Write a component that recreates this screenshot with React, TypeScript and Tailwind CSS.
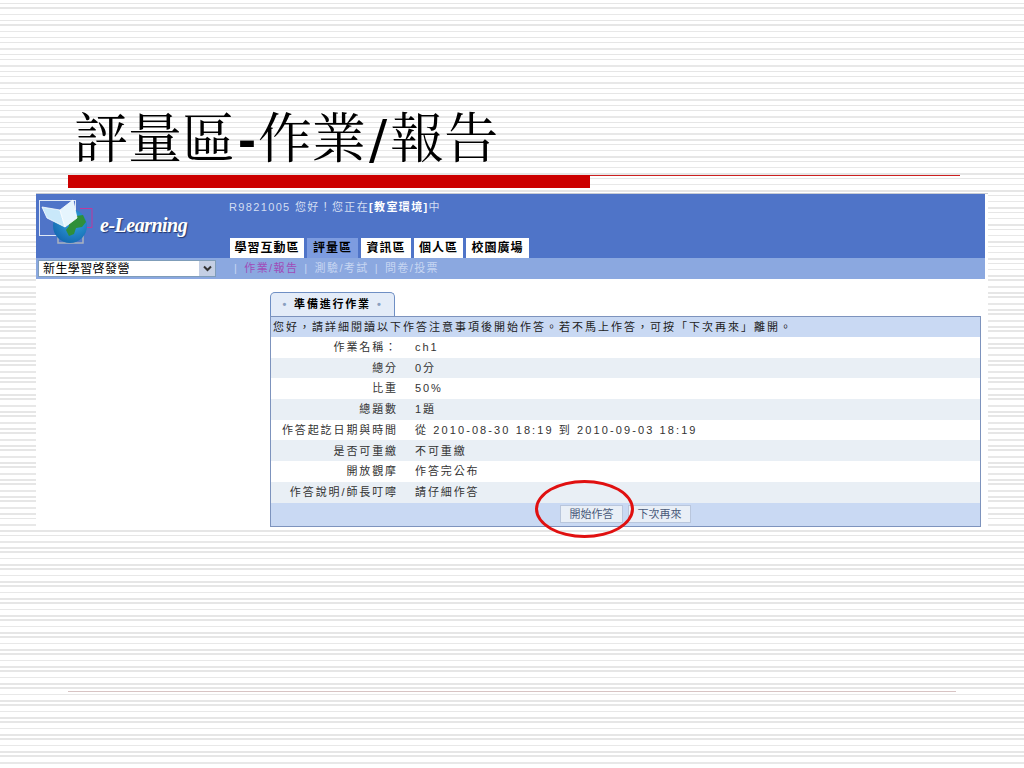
const rows = [
  { label: '作業名稱：', value: 'ch1', tone: 'bg-white', wide: false },
  { label: '總分', value: '0分', tone: 'bg-[#e9eff5]', wide: false },
  { label: '比重', value: '50%', tone: 'bg-white', wide: false },
  { label: '總題數', value: '1題', tone: 'bg-[#e9eff5]', wide: false },
  { label: '作答起訖日期與時間', value: '從 2010-08-30 18:19 到 2010-09-03 18:19', tone: 'bg-white', wide: true },
  { label: '是否可重繳', value: '不可重繳', tone: 'bg-[#e9eff5]', wide: false },
  { label: '開放觀摩', value: '作答完公布', tone: 'bg-white', wide: false },
  { label: '作答說明/師長叮嚀', value: '請仔細作答', tone: 'bg-[#e9eff5]', wide: false },
];

const tabs = [
  { name: '學習互動區', width: 'w-[74px]' },
  { name: '評量區', width: 'w-[51px]' },
  { name: '資訊區', width: 'w-[50px]' },
  { name: '個人區', width: 'w-[49px]' },
  { name: '校園廣場', width: 'w-[63px]' },
];

function Logo() {
  return (
    <svg width="60" height="52" viewBox="0 0 60 52" className="mt-[1px] shrink-0">
      <defs>
        <radialGradient id="globe" cx="0.6" cy="0.35" r="0.8">
          <stop offset="0" stopColor="#35a6e0" />
          <stop offset="1" stopColor="#0f5fa8" />
        </radialGradient>
      </defs>
      <rect x="2.5" y="5.5" width="36" height="35" fill="none" stroke="#dfe8f5" />
      <path d="M43 13.5h12v19h-12" fill="none" stroke="#c0399a" />
      <path d="M21 36v12h25v-12" fill="none" stroke="#aab2be" strokeWidth="1.5" />
      <circle cx="33" cy="31" r="17" fill="url(#globe)" />
      <path d="M32 27l7-6 7-1 3 7-4 5-6 1-2 6-5 2-3-6 3-4z" fill="#2f8f3a" />
      <path d="M5 12l18 3 5 17-18-9z" fill="#c9e8fa" stroke="#ffffff" strokeWidth="0.8" />
      <path d="M23 15L36 5l4 18-12 9z" fill="#e6f5fd" stroke="#ffffff" strokeWidth="0.8" />
    </svg>
  );
}

export default function App() {
  return (
    <div className="relative h-[768px] w-[1024px] overflow-hidden bg-white bg-[repeating-linear-gradient(to_bottom,#ffffff_0px,#ffffff_3px,#e6e6e6_3px,#e6e6e6_4.5px,#ffffff_4.5px,#ffffff_7.5px,#e6e6e6_7.5px,#e6e6e6_9px,#ffffff_9px,#ffffff_14px,#e8e8e8_14px,#e8e8e8_15.5px,#ffffff_15.5px,#ffffff_17px)] font-['Liberation_Sans','Noto_Sans_CJK_TC',sans-serif]">
      <h1 className="pl-[74px] pt-[108px] font-['Liberation_Serif','Noto_Serif_CJK_TC','Noto_Sans_CJK_TC',serif] text-[54px] leading-[62px] font-normal text-black">
        評量區<span className="px-[2px] font-['Liberation_Sans',sans-serif] font-bold">-</span>作業
        <span className="px-[3px] font-['DejaVu_Sans',sans-serif]">/</span>報告
      </h1>

      <div className="mt-[4px] ml-[68px] flex h-[13px] w-[892px] items-start">
        <div className="h-[13px] w-[522px] bg-[#cc0000]" />
        <div className="h-px flex-1 bg-[#cc2020]" />
      </div>

      <div className="mt-[5px] ml-[36px] w-[952px] border-t border-[#c8ccd4] bg-white">
        <div className="mr-[3px] h-[64px] bg-[#4f74c8] pl-[1px]">
          <div className="flex">
            <div className="flex w-[192px] items-start">
              <Logo />
              <span className="mt-[17px] ml-[3px] font-['Liberation_Serif',serif] text-[20px] leading-[28px] font-bold tracking-[-0.5px] text-white italic [text-shadow:1px_1px_1px_#23386e]">
                e-Learning
              </span>
            </div>
            <div className="pt-[6px]">
              <p className="text-[11px] leading-[14px] tracking-[1.35px] text-[#d3def2]">
                R9821005 您好！您正在<b className="text-white">[教室環境]</b>中
              </p>
              <div className="mt-[24px] ml-[1px] flex gap-[3px]">
                {tabs.map((t, i) => (
                  <div
                    key={t.name}
                    className={`flex h-[20px] items-center justify-center text-[12px] font-bold tracking-[1px] text-black ${t.width} ${i === 1 ? 'bg-[#7d9ce0]' : 'bg-white'}`}
                  >
                    {t.name}
                  </div>
                ))}
              </div>
            </div>
          </div>
        </div>

        <div className="mr-[3px] flex h-[21px] items-center bg-[#8ba8e0]">
          <div className="ml-[2px] flex h-[17px] w-[178px] items-center justify-between border border-[#7f9db9] bg-white pl-[4px] text-[12px] tracking-[0.4px] text-black">
            新生學習啓發營
            <span className="flex h-[15px] w-[16px] items-center justify-center bg-[#c4cfe4]">
              <svg width="9" height="7" viewBox="0 0 9 7">
                <path d="M1 1.5l3.5 3.5 3.5-3.5" fill="none" stroke="#333" strokeWidth="2" />
              </svg>
            </span>
          </div>
          <div className="ml-[18px] flex items-center gap-[6px] text-[11px] tracking-[1.4px] text-[#c7d6f2]">
            <span>|</span>
            <span className="text-[#a04cb8]">作業/報告</span>
            <span>|</span>
            <span>測驗/考試</span>
            <span>|</span>
            <span>問卷/投票</span>
          </div>
        </div>

        <div className="pl-[234px] pr-[7px] pt-[13px]">
          <div className="flex h-[24px] w-[125px] items-center justify-center gap-[6px] rounded-t-[5px] border border-b-0 border-[#6f8fc4] bg-[#e4ecf8] text-[11px] font-bold tracking-[1.8px] text-black">
            <span className="text-[#8aa0c0]">•</span>
            準備進行作業
            <span className="text-[#8aa0c0]">•</span>
          </div>
          <div className="border border-[#7d93bd]">
            <div className="flex h-[20px] items-center bg-[#c9d9f3] pl-[2px] text-[11px] tracking-[2px] whitespace-nowrap text-[#222]">
              您好，請詳細閱讀以下作答注意事項後開始作答。若不馬上作答，可按「下次再來」離開。
            </div>
            {rows.map((r) => (
              <div key={r.label} className={`flex h-[20.7px] items-center text-[11px] tracking-[1.9px] text-[#333] ${r.tone}`}>
                <div className="w-[127px] text-right whitespace-nowrap">{r.label}</div>
                <div className={`ml-[17px] whitespace-nowrap ${r.wide ? 'tracking-[2.1px]' : ''}`}>{r.value}</div>
              </div>
            ))}
            <div className="flex h-[23px] items-center justify-center gap-[5px] bg-[#c9d9f3] text-[11px] text-[#4a5a7a]">
              <span className="flex h-[18px] w-[63px] items-center justify-center border border-[#b9c6dc] bg-[#e9eff7]">開始作答</span>
              <span className="flex h-[18px] w-[63px] items-center justify-center border border-[#b9c6dc] bg-[#e9eff7]">下次再來</span>
            </div>
          </div>
        </div>
      </div>

      <div className="absolute left-[535px] top-[480px] h-[58px] w-[99px] rounded-[50%] border-[3px] border-[#e01010]" />

      <div className="absolute left-[68px] top-[691px] h-px w-[888px] bg-[#d8c4c4]" />
    </div>
  );
}
